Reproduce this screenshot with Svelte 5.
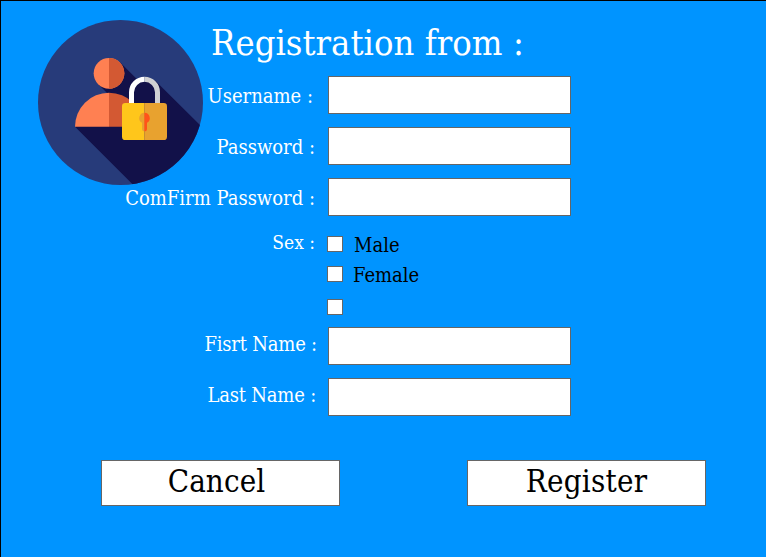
<script>
  const account = [
    { id: 'username', label: 'Username :', end: 15 },
    { id: 'password', label: 'Password :', end: 13 },
    { id: 'confirm', label: 'ComFirm Password :', end: 13 }
  ];
  const names = [
    { id: 'first', label: 'Fisrt Name :', end: 11 },
    { id: 'last', label: 'Last Name :', end: 12 }
  ];
</script>

<main>
  <svg class="logo" viewBox="0 0 495 495" aria-hidden="true">
    <defs>
      <clipPath id="disc"><circle cx="271.5" cy="277.5" r="247.5" /></clipPath>
    </defs>
    <g transform="translate(-24 -30)">
      <circle cx="271.5" cy="277.5" r="247.5" fill="#273b7a" />
      <g clip-path="url(#disc)" fill="#121149">
        <path d="M270 157L204 222L235 253L135 350L335 550H560V395L376 212L330 217Z" />
      </g>
      <circle cx="237" cy="190" r="46" fill="#ff8052" />
      <path d="M237 144a46 46 0 0 1 0 92z" fill="#d35933" />
      <path d="M135 350a102 102 0 0 1 102-102v102z" fill="#ff8052" />
      <path d="M237 248a102 102 0 0 1 102 102H237z" fill="#d35933" />
      <path d="M304.500 282V247A39 39 0 0 1 343.500 208" fill="none" stroke="#fff" stroke-width="15" />
      <path d="M343.500 208A39 39 0 0 1 382.500 247V282" fill="none" stroke="#d0d1d3" stroke-width="15" />
      <path d="M343.500 279H286a10 10 0 0 0-10 10v91a10 10 0 0 0 10 10h57.500z" fill="#ffc61b" />
      <path d="M343 279h58a10 10 0 0 1 10 10v91a10 10 0 0 1-10 10h-58z" fill="#e8a22f" />
      <path d="M344 308a16 16 0 0 0-8 30v18a8 8 0 0 0 8 8z" fill="#e8a22f" />
      <path d="M343 308a16 16 0 0 1 8 30v18a8 8 0 0 1-8 8z" fill="#ff5419" />
    </g>
  </svg>

  <h1>Registration from :</h1>

  <form onsubmit={(e) => e.preventDefault()}>
    <div class="fields account">
      {#each account as f}
        <div class="row">
          <label for={f.id} style:padding-right="{f.end}px">{f.label}</label>
          <input id={f.id} type="text" />
        </div>
      {/each}
    </div>

    <div class="sex">
      <span class="caption">Sex :</span>
      <div class="options">
        <label class="male"><input type="checkbox" />Male</label>
        <label class="female"><input type="checkbox" />Female</label>
        <label class="blank"><input type="checkbox" aria-label="Other" /></label>
      </div>
    </div>

    <div class="fields names">
      {#each names as f}
        <div class="row">
          <label for={f.id} style:padding-right="{f.end}px">{f.label}</label>
          <input id={f.id} type="text" />
        </div>
      {/each}
    </div>

    <div class="actions">
      <button type="button" class="cancel">Cancel</button>
      <button type="submit" class="register">Register</button>
    </div>
  </form>
</main>

<style>
  main {
    position: relative;
    box-sizing: border-box;
    width: 766px;
    height: 557px;
    overflow: hidden;
    border-top: 1px solid #000;
    border-left: 1px solid #000;
    background: #0094ff;
    color: #fff;
    font-family: 'DejaVu Serif Condensed', 'DejaVu Serif', serif;
    font-stretch: condensed;
    font-size: 19px;
    white-space: nowrap;
  }
  .logo {
    position: absolute;
    left: 37px;
    top: 19px;
    width: 165px;
    height: 165px;
  }
  h1 {
    box-sizing: border-box;
    margin: 0;
    padding: 21px 0 0 210px;
    height: 75px;
    font-size: 36px;
    font-weight: 400;
    line-height: 42px;
    letter-spacing: 0.05px;
  }
  form { display: flex; flex-direction: column; }
  .fields { display: flex; flex-direction: column; gap: 13px; }
  .row { display: flex; height: 38px; }
  .row label {
    box-sizing: border-box;
    width: 327px;
    text-align: right;
    font-size: 20px;
    line-height: 40px;
  }
  .names .row label { line-height: 34px; letter-spacing: -0.2px; }
  input {
    box-sizing: border-box;
    margin: 0;
    border: 1px solid #666;
    border-radius: 0;
    background: #fff;
    appearance: none;
  }
  .row input { width: 243px; padding: 0 8px; font: inherit; }
  .sex { display: flex; height: 111px; box-sizing: border-box; padding-top: 16px; }
  .caption {
    box-sizing: border-box;
    width: 326px;
    padding-right: 12px;
    text-align: right;
    line-height: 20px;
  }
  .options { display: flex; flex-direction: column; color: #000; font-size: 20px; }
  .options label {
    display: flex;
    align-items: flex-start;
    box-sizing: border-box;
    line-height: 26px;
  }
  .options input { width: 16px; height: 16px; margin: 4px 10px 0 0; }
  .options .male { height: 24px; }
  .options .male input { margin-right: 11px; }
  .options .female { height: 36px; padding-top: 6px; }
  .options .blank { height: 30px; padding-top: 3px; }
  .actions { display: flex; gap: 127px; padding: 44px 0 0 100px; }
  button {
    box-sizing: border-box;
    width: 239px;
    height: 46px;
    padding: 0 0 5px;
    border: 1px solid #666;
    border-radius: 0;
    background: #fff;
    color: #000;
    font-family: inherit;
    font-stretch: inherit;
    font-size: 31px;
    line-height: 38px;
  }
  .cancel { padding-right: 8px; letter-spacing: 0.1px; }
  .register { letter-spacing: 0.25px; }
</style>
